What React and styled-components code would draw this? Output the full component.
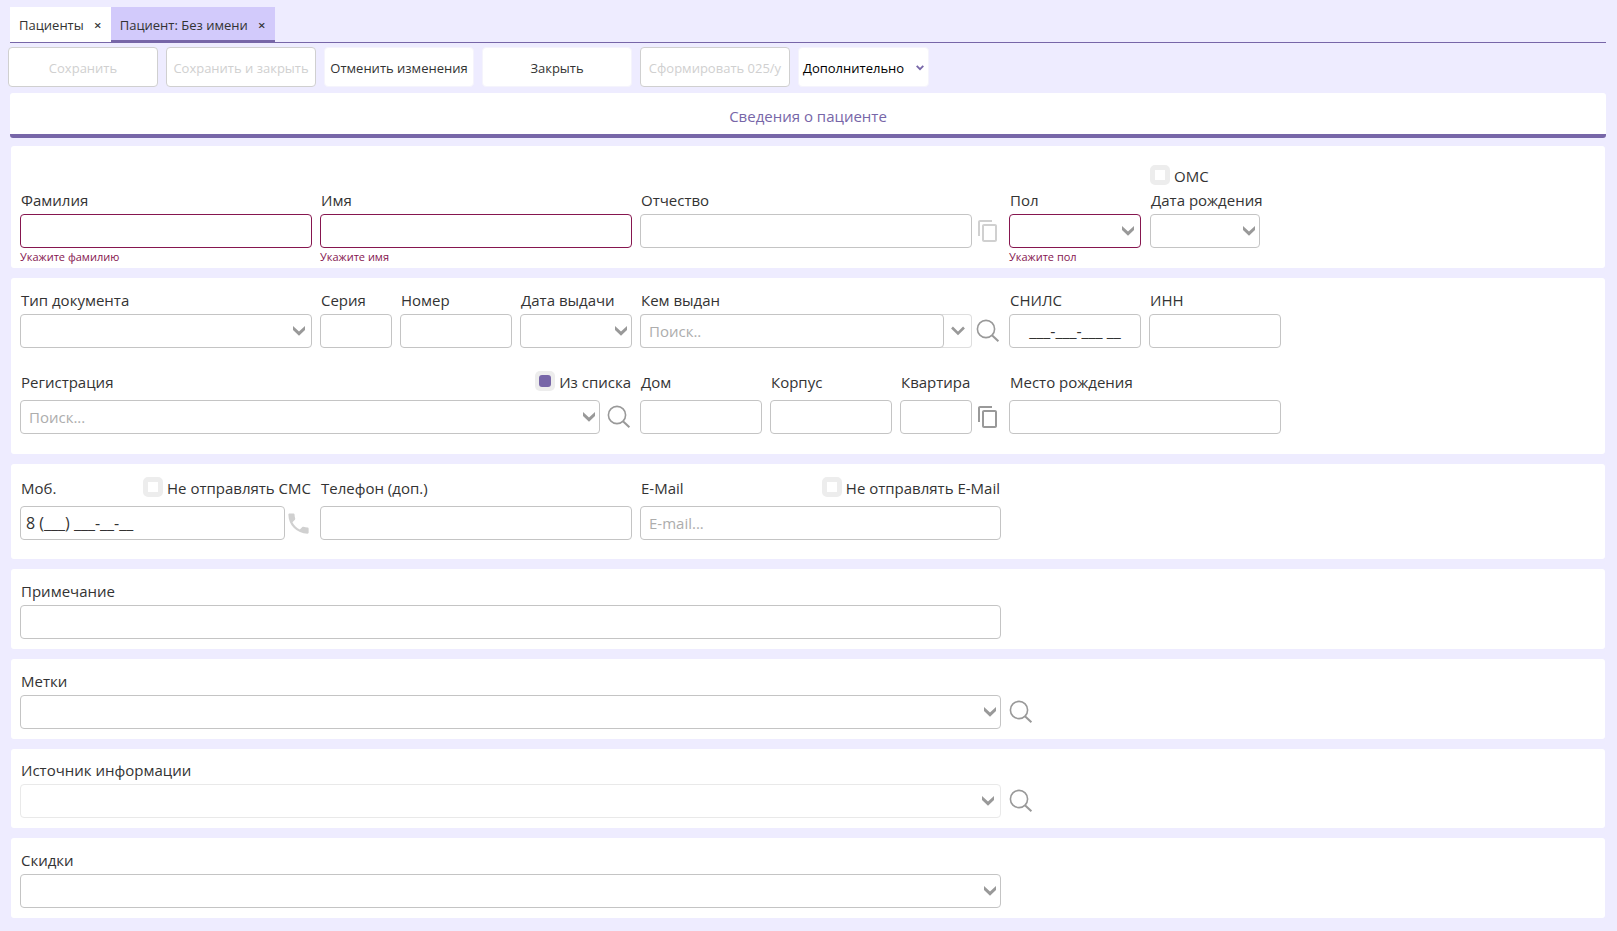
import React from 'react';

import styled, { createGlobalStyle, css } from 'styled-components';
import { MdContentCopy, MdPhone } from 'react-icons/md';

const COLORS = {
  page: '#eeecff',
  accent: '#7766a8',
  accentLight: '#d2cafb',
  text: '#333',
  border: '#c4c4c4',
  borderLight: '#e9e9e9',
  muted: '#d0d0d0',
  placeholder: '#adadad',
  icon: '#999',
  error: '#86164f',
};

const GlobalStyle = createGlobalStyle`
  * {
    box-sizing: border-box;
  }

  body {
    margin: 0;
    background: ${COLORS.page};
    color: ${COLORS.text};
    font-family: 'Open Sans', 'Noto Sans', sans-serif;
    font-size: 15px;
  }

  button, input, select {
    font: inherit;
    color: inherit;
  }
`;

const Page = styled.div`
  padding: 7px 11px 14px 10px;
`;

const Tabs = styled.nav`
  display: flex;
  border-bottom: 1px solid ${COLORS.accent};
`;

const Tab = styled.div`
  display: flex;
  align-items: center;
  height: 35px;
  padding: 2px 6px 0 9px;
  background: ${props => (props.$active ? COLORS.accentLight : '#fff')};
  border-bottom: 2px solid ${props => (props.$active ? COLORS.accent : '#fff')};
`;

const TabLink = styled.a`
  color: inherit;
  font-size: 13px;
  text-decoration: none;
`;

const TabClose = styled.button`
  width: 14px;
  margin-left: 7px;
  padding: 0;
  border: 0;
  background: none;
  font-size: 13px;
  font-weight: 600;
  line-height: 20px;
`;

const Toolbar = styled.div`
  display: flex;
  flex-wrap: wrap;
  gap: 8px;
  margin: 4px 0 6px -2px;
`;

const ToolButton = styled.button`
  width: 150px;
  height: 40px;
  padding: 2px 0 0;
  border: 1px solid #f5f4fc;
  border-radius: 4px;
  background: #fff;
  font-size: 13px;
  white-space: nowrap;

  &:disabled {
    border-color: ${COLORS.muted};
    color: ${COLORS.muted};
  }
`;

const MenuButton = styled(ToolButton)`
  display: flex;
  align-items: center;
  justify-content: space-between;
  width: 131px;
  padding: 2px 4px 0;
  color: #000;
`;

const SectionTitle = styled.h1`
  height: 45px;
  margin: 0;
  padding-top: 4px;
  border-bottom: 4px solid ${COLORS.accent};
  border-radius: 3px;
  background: #fff;
  color: ${COLORS.accent};
  font-size: 15px;
  font-weight: 400;
  line-height: 38px;
  text-align: center;
`;

const Form = styled.form`
  display: flex;
  flex-direction: column;
  gap: 10px;
  margin: 8px 1px 0;
`;

const Card = styled.section`
  display: grid;
  grid-template-columns: minmax(0, 292px) minmax(0, 312px) minmax(0, 361px) minmax(0, 272px);
  column-gap: 8px;
  padding: ${props => props.$pad || '10px 9px'};
  border-radius: 3px;
  background: #fff;
`;

const AddressRow = styled.div`
  display: grid;
  grid-column: 1 / -1;
  grid-template-columns: minmax(0, 612px) minmax(0, 361px) minmax(0, 272px);
  column-gap: 8px;
  margin-top: 22px;
`;

const Split = styled.div`
  display: grid;
  grid-template-columns: ${props => props.$cols};
  gap: ${props => props.$gap || 8}px;
`;

// The ОМС tick box stands above the birth date label, in the card's top padding
const BirthCell = styled.div`
  margin-top: -24px;
`;

const FieldBox = styled.div`
  grid-column: span ${props => props.$span || 1};
  min-width: 0;
`;

const FieldHead = styled.div`
  display: flex;
  justify-content: space-between;
  padding: 0 1px ${props => (props.$tall ? 6 : 2)}px;
  line-height: 24px;
  white-space: nowrap;
`;

const ControlRow = styled.div`
  display: flex;
`;

const Control = styled.div`
  position: relative;
  flex: 1;
  min-width: 0;
`;

const boxStyle = css`
  display: block;
  width: 100%;
  height: 34px;
  margin: 0;
  padding: 0 8px;
  border: 1px solid ${props => (props.$error ? COLORS.error : COLORS.border)};
  border-radius: 4px;
  background: #fff;
  outline: none;
`;

const Input = styled.input`
  ${boxStyle}

  &::placeholder {
    color: ${COLORS.placeholder};
    opacity: 1;
  }
`;

const MaskedInput = styled(Input)`
  padding: 0 5px;
  font-size: 16px;
  text-align: ${props => props.$align || 'left'};
`;

const Select = styled.select`
  ${boxStyle}
  appearance: none;
  ${props => props.$light && `border-color: ${COLORS.borderLight};`}
`;

const arrowPlace = css`
  position: absolute;
  top: 0;
  display: flex;
  align-items: center;
  height: 34px;
`;

const SelectArrow = styled.span`
  ${arrowPlace}
  right: 7px;
  pointer-events: none;
`;

const PickerButton = styled.button`
  ${arrowPlace}
  right: 5px;
  padding: 0;
  border: 0;
  background: none;
`;

const ComboBox = styled.div`
  display: flex;
  flex: 1;
  min-width: 0;
  height: 34px;
  border-radius: 4px;
  box-shadow: inset 0 0 0 1px #dedede;
`;

const ComboButton = styled.button`
  display: flex;
  flex: 0 0 28px;
  align-items: center;
  justify-content: center;
  padding: 0;
  border: 0;
  background: none;
`;

const IconButton = styled.button`
  display: flex;
  flex: none;
  align-items: center;
  justify-content: flex-end;
  width: ${props => props.$width || 29}px;
  height: 34px;
  padding: 0 1px 0 0;
  border: 0;
  background: none;
  color: ${COLORS.icon};

  &:disabled {
    color: ${COLORS.muted};
  }
`;

const PhoneButton = styled(IconButton)`
  width: 27px;
  padding: 0;
`;

const SideButton = styled(IconButton)`
  align-self: end;
  width: 24px;
  padding: 0;
`;

const ErrorText = styled.p`
  margin: 0;
  color: ${COLORS.error};
  font-size: 11px;
  line-height: 18px;
`;

const CheckLabel = styled.label`
  display: flex;
  gap: 4px;
  line-height: 24px;
  white-space: nowrap;
`;

const Checkbox = styled.input`
  appearance: none;
  flex: none;
  width: 20px;
  height: 20px;
  margin: 1px 0 0;
  border: 5px solid #ededed;
  border-radius: 5px;
  background: #fff;

  &:checked {
    border: 0;
    background: #ededed;
    padding: 4px;
  }

  &:checked::before {
    display: block;
    width: 12px;
    height: 12px;
    border-radius: 3px;
    background: ${COLORS.accent};
    content: '';
  }
`;

const ArrowIcon = () => (
  <svg width="12" height="10" viewBox="0 0 12 10" aria-hidden="true">
    <path d="M0 0L6 5.4L12 0V4L6 9.8L0 4Z" fill={COLORS.icon} />
  </svg>
);

const ComboArrowIcon = () => (
  <svg width="14" height="10" viewBox="0 0 14 10" aria-hidden="true">
    <path d="M1 1.5L7 7.5L13 1.5" fill="none" stroke={COLORS.icon} strokeWidth="2.6" />
  </svg>
);

const MenuArrowIcon = () => (
  <svg width="8" height="6" viewBox="0 0 8 6" aria-hidden="true">
    <path d="M0.7 0.9L4 4.2L7.3 0.9" fill="none" stroke={COLORS.accent} strokeWidth="1.8" />
  </svg>
);

const SearchIcon = () => (
  <svg width="24" height="24" viewBox="0 0 24 24" aria-hidden="true">
    <circle cx="10" cy="10" r="8.6" fill="none" stroke="currentColor" strokeWidth="1.6" />
    <path d="M16 16.2L22.4 22.2" stroke="currentColor" strokeWidth="2" />
  </svg>
);

const Check = ({ label, checked }) => (
  <CheckLabel>
    <Checkbox type="checkbox" defaultChecked={checked} />
    {label}
  </CheckLabel>
);

const Field = ({ id, label, span, tall, extra, error, button, children }) => (
  <FieldBox $span={span}>
    <FieldHead $tall={tall}>
      <label htmlFor={id}>{label}</label>
      {extra}
    </FieldHead>
    <ControlRow>
      {children}
      {button}
    </ControlRow>
    {error && <ErrorText>{error}</ErrorText>}
  </FieldBox>
);

const TextControl = props => (
  <Control><Input type="text" {...props} /></Control>
);

const MaskedControl = props => (
  <Control><MaskedInput type="text" {...props} /></Control>
);

const SelectControl = props => (
  <Control>
    <Select {...props}><option value="" /></Select>
    <SelectArrow><ArrowIcon /></SelectArrow>
  </Control>
);

const PickerControl = ({ action, ...props }) => (
  <Control>
    <Input type="text" {...props} />
    <PickerButton type="button" aria-label={action}><ArrowIcon /></PickerButton>
  </Control>
);

const SearchButton = ({ width }) => (
  <IconButton type="button" $width={width} aria-label="Поиск"><SearchIcon /></IconButton>
);

const CopyButton = ({ disabled }) => (
  <IconButton type="button" disabled={disabled} aria-label="Копировать">
    <MdContentCopy size={24} />
  </IconButton>
);

const App = () => (
  <Page>
    <GlobalStyle />
    <Tabs>
      <Tab>
        <TabLink href="#patients">Пациенты</TabLink>
        <TabClose type="button">×</TabClose>
      </Tab>
      <Tab $active>
        <TabLink href="#patient">Пациент: Без имени</TabLink>
        <TabClose type="button">×</TabClose>
      </Tab>
    </Tabs>
    <Toolbar>
      <ToolButton type="button" disabled>Сохранить</ToolButton>
      <ToolButton type="button" disabled>Сохранить и закрыть</ToolButton>
      <ToolButton type="button">Отменить изменения</ToolButton>
      <ToolButton type="button">Закрыть</ToolButton>
      <ToolButton type="button" disabled>Сформировать 025/у</ToolButton>
      <MenuButton type="button">
        Дополнительно
        <MenuArrowIcon />
      </MenuButton>
    </Toolbar>
    <SectionTitle>Сведения о пациенте</SectionTitle>

    <Form>
      <Card $pad="42px 9px 2px">
        <Field id="surname" label="Фамилия" error="Укажите фамилию">
          <TextControl id="surname" $error />
        </Field>
        <Field id="name" label="Имя" error="Укажите имя">
          <TextControl id="name" $error />
        </Field>
        <Field id="patronymic" label="Отчество" button={<CopyButton disabled />}>
          <TextControl id="patronymic" />
        </Field>
        <Split $cols="minmax(0, 132px) minmax(0, 110px)" $gap={9}>
          <Field id="sex" label="Пол" error="Укажите пол">
            <SelectControl id="sex" $error />
          </Field>
          <BirthCell>
            <Check label="ОМС" />
            <Field id="birth" label="Дата рождения">
              <PickerControl id="birth" action="Выбрать дату" />
            </Field>
          </BirthCell>
        </Split>
      </Card>

      <Card $pad="10px 9px 20px">
        <Field id="doctype" label="Тип документа">
          <SelectControl id="doctype" />
        </Field>
        <Split $cols="72fr 112fr 112fr">
          <Field id="series" label="Серия">
            <TextControl id="series" />
          </Field>
          <Field id="number" label="Номер">
            <TextControl id="number" />
          </Field>
          <Field id="issued" label="Дата выдачи">
            <PickerControl id="issued" action="Выбрать дату" />
          </Field>
        </Split>
        <Field id="issuer" label="Кем выдан" button={<SearchButton />}>
          <ComboBox>
            <Input id="issuer" type="text" placeholder="Поиск.." />
            <ComboButton type="button" aria-label="Открыть список"><ComboArrowIcon /></ComboButton>
          </ComboBox>
        </Field>
        <Split $cols="1fr 1fr">
          <Field id="snils" label="СНИЛС">
            <MaskedControl id="snils" $align="center" defaultValue="___-___-___ __" />
          </Field>
          <Field id="inn" label="ИНН">
            <TextControl id="inn" />
          </Field>
        </Split>
        <AddressRow>
          <Field
            id="registration"
            label="Регистрация"
            tall
            extra={<Check label="Из списка" checked />}
            button={<SearchButton width={32} />}
          >
            <PickerControl id="registration" action="Открыть список" placeholder="Поиск..." />
          </Field>
          <Split $cols="122fr 122fr 101fr">
            <Field id="house" label="Дом" tall>
              <TextControl id="house" />
            </Field>
            <Field id="building" label="Корпус" tall>
              <TextControl id="building" />
            </Field>
            <Field id="flat" label="Квартира" tall button={<CopyButton />}>
              <TextControl id="flat" />
            </Field>
          </Split>
          <Field id="birthplace" label="Место рождения" tall>
            <TextControl id="birthplace" />
          </Field>
        </AddressRow>
      </Card>

      <Card $pad="12px 9px 19px">
        <Field
          id="mobile"
          label="Моб."
          tall
          extra={<Check label="Не отправлять СМС" />}
          button={
            <PhoneButton type="button" disabled aria-label="Позвонить">
              <MdPhone size={27} />
            </PhoneButton>
          }
        >
          <MaskedControl id="mobile" defaultValue="8 (___) ___-__-__" />
        </Field>
        <Field id="phone" label="Телефон (доп.)" tall>
          <TextControl id="phone" />
        </Field>
        <Field id="email" label="E-Mail" tall extra={<Check label="Не отправлять E-Mail" />}>
          <TextControl id="email" placeholder="E-mail..." />
        </Field>
      </Card>

      <Card>
        <Field id="note" label="Примечание" span={3}>
          <TextControl id="note" />
        </Field>
      </Card>

      <Card>
        <Field id="marks" label="Метки" span={3}>
          <PickerControl id="marks" action="Открыть список" />
        </Field>
        <SideButton type="button" aria-label="Поиск"><SearchIcon /></SideButton>
      </Card>

      <Card $pad="9px 9px 10px">
        <Field id="source" label="Источник информации" span={3}>
          <SelectControl id="source" $light />
        </Field>
        <SideButton type="button" aria-label="Поиск"><SearchIcon /></SideButton>
      </Card>

      <Card>
        <Field id="discounts" label="Скидки" span={3}>
          <PickerControl id="discounts" action="Открыть список" />
        </Field>
      </Card>
    </Form>
  </Page>
);

export default App;
